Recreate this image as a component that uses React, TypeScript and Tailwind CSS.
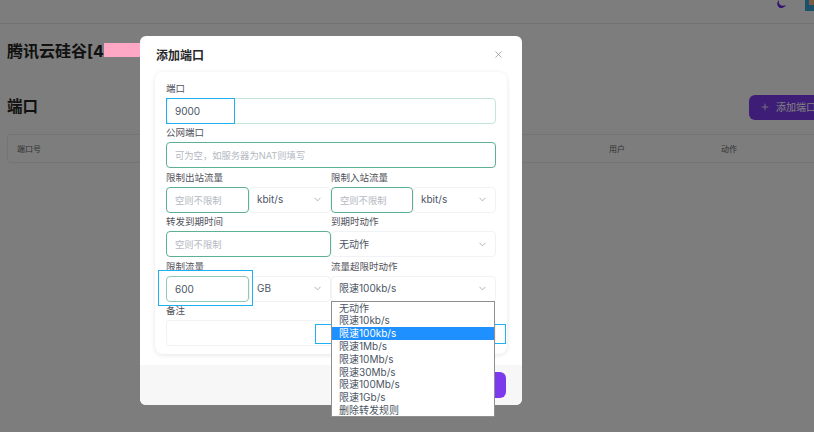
import { ChevronDown, Plus, X } from "lucide-react";

const fieldInput = "block h-[26px] rounded-[4px] border bg-white px-[8px] text-[10px] text-[#4b5563] outline-none placeholder:text-[9.300px] placeholder:text-[#b4b9c2]";
const selectBox = "flex h-[26px] items-center justify-between rounded-[4px] border border-[#f1f2f6] bg-white pl-[7px] pr-[7px] text-[10px] text-[#4b5563]";
const labelText = "block h-[18.400px] pt-[3.500px] text-[9.500px] leading-[12px] text-[#52525b]";

const options = ["无动作", "限速10kb/s", "限速100kb/s", "限速1Mb/s", "限速10Mb/s", "限速30Mb/s", "限速100Mb/s", "限速1Gb/s", "删除转发规则"];

const Field = ({ label, children }: { label: string; children: React.ReactNode }) => (
  <div>
    <label className={labelText}>{label}</label>
    {children}
  </div>
);

const FakeSelect = ({ value, className = "" }: { value: string; className?: string }) => (
  <div className={`${selectBox} ${className}`}>
    <span>{value}</span>
    <ChevronDown size={11} strokeWidth={1.5} className="text-[#8b93a1]" />
  </div>
);

export default function App() {
  return (
    <div className="relative h-[432px] w-[814px] overflow-hidden bg-[#fafafa] font-['Inter','Noto_Sans_CJK_SC',sans-serif]">
      {/* page behind the dialog */}
      <header className="flex h-[24px] items-start justify-end gap-[17px] overflow-hidden border-b border-[#e5e5e5] bg-[#fafafa]">
        <svg width="12" height="9" viewBox="0 0 12 9">
          <path d="M3 0 C2 4 5 7 10 5 C8 9 3 9 1.500 5.500 C0.800 3.500 1.500 1.500 3 0Z" fill="#6d28d9" />
        </svg>
        <svg width="9" height="11" viewBox="0 0 9 11">
          <rect x="0" y="0" width="9" height="11" fill="#38a3d8" />
          <rect x="4" y="0" width="5" height="5" fill="#f2b98a" />
        </svg>
      </header>
      <main className="pl-[7px]">
        <h1 className="mt-[15px] h-[24px] text-[16px] leading-[24px] font-bold text-[#222222]">腾讯云硅谷[4</h1>
        <div className="mt-[32px] flex h-[24px] items-center justify-between">
          <h2 className="text-[15.500px] font-bold text-[#222222]">端口</h2>
          <div className="h-[25px] w-[65px] shrink-0 overflow-hidden">
            <button className="flex h-[25px] w-[90px] items-center gap-[6px] rounded-l-[6px] bg-[#7c3aed] pl-[11px] text-[10px] whitespace-nowrap text-white">
              <Plus size={10} />
              添加端口
            </button>
          </div>
        </div>
        <div className="mt-[15px] grid h-[29px] grid-cols-[592px_112px_1fr] items-center rounded-l-[4px] border border-r-0 border-[#e8e8e8] pl-[9px] text-[8px] text-[#666666]">
          <span>端口号</span>
          <span>用户</span>
          <span>动作</span>
        </div>
      </main>

      {/* dim layer */}
      <div className="absolute inset-0 bg-black/50" />
      {/* pink cover over the title */}
      <div className="absolute top-[43px] left-[104px] h-[14px] w-[38px] bg-[#ffa8c5]" />

      {/* dialog */}
      <div className="absolute top-[36px] left-[140px] flex h-[369px] w-[382px] flex-col rounded-[6px] bg-white">
        <div className="flex h-[36px] shrink-0 items-center justify-between pr-[18px] pl-[16px]">
          <h3 className="pt-[3px] text-[12px] font-bold text-[#27272a]">添加端口</h3>
          <X size={11} strokeWidth={1.25} className="text-[#71717a]" />
        </div>
        <div className="mx-[15px] h-[282px] shrink-0 rounded-[8px] px-[11px] pt-[7.600px] shadow-[0_1px_5px_rgba(0,0,0,0.1)]">
          <Field label="端口">
            <input className={`${fieldInput} w-full border-[#c3e5da]`} defaultValue="9000" />
          </Field>
          <Field label="公网端口">
            <input className={`${fieldInput} w-full border-[#5eb095]`} placeholder="可为空，如服务器为NAT则填写" />
          </Field>
          <div className="grid grid-cols-2">
            <Field label="限制出站流量">
              <div className="flex w-[165px]">
                <input className={`${fieldInput} w-[83px] shrink-0 border-[#5eb095]`} placeholder="空则不限制" />
                <FakeSelect value="kbit/s" className="w-[82px]" />
              </div>
            </Field>
            <Field label="限制入站流量">
              <div className="flex w-[165px]">
                <input className={`${fieldInput} w-[82px] shrink-0 border-[#5eb095]`} placeholder="空则不限制" />
                <FakeSelect value="kbit/s" className="w-[83px]" />
              </div>
            </Field>
            <Field label="转发到期时间">
              <input className={`${fieldInput} w-[165px] border-[#5eb095]`} placeholder="空则不限制" />
            </Field>
            <Field label="到期时动作">
              <FakeSelect value="无动作" className="w-[165px]" />
            </Field>
            <Field label="限制流量">
              <div className="flex w-[165px]">
                <input className={`${fieldInput} w-[83px] shrink-0 border-[#8fcab6]`} defaultValue="600" />
                <FakeSelect value="GB" className="w-[82px]" />
              </div>
            </Field>
            <Field label="流量超限时动作">
              <div className="relative">
                <FakeSelect value="限速100kb/s" className="w-[165px] border-[#d5cdfa]" />
                <ul className="absolute top-[25px] left-0 z-10 h-[116px] w-[164px] border border-[#8f8f8f] bg-white text-[10px] leading-[12.800px] text-[#4b5563]">
                  {options.map((opt) => (
                    <li key={opt} className={opt === "限速100kb/s" ? "bg-[#1e90ff] pl-[7px] text-white" : "pl-[7px]"}>
                      {opt}
                    </li>
                  ))}
                </ul>
              </div>
            </Field>
          </div>
          <Field label="备注">
            <input className={`${fieldInput} w-full border-[#f1f2f6]`} />
          </Field>
        </div>
        <div className="mt-[11px] flex flex-1 items-start justify-end rounded-b-[6px] bg-[#f7f7f7] pt-[7px] pr-[16px]">
          <button className="h-[26px] w-[80px] rounded-[6px] bg-[#7c3aed] text-[10px] text-white">确定</button>
        </div>
      </div>

      {/* blue annotation boxes */}
      <div className="absolute top-[98px] left-[166px] h-[26px] w-[69px] border-[1.500px] border-[#1eb0f0]" />
      <div className="absolute top-[270px] left-[158px] h-[36px] w-[95px] border-[1.500px] border-[#1eb0f0]" />
      <div className="absolute top-[324px] left-[315px] h-[20px] w-[191px] border-[1.500px] border-[#1eb0f0]" />
    </div>
  );
}
